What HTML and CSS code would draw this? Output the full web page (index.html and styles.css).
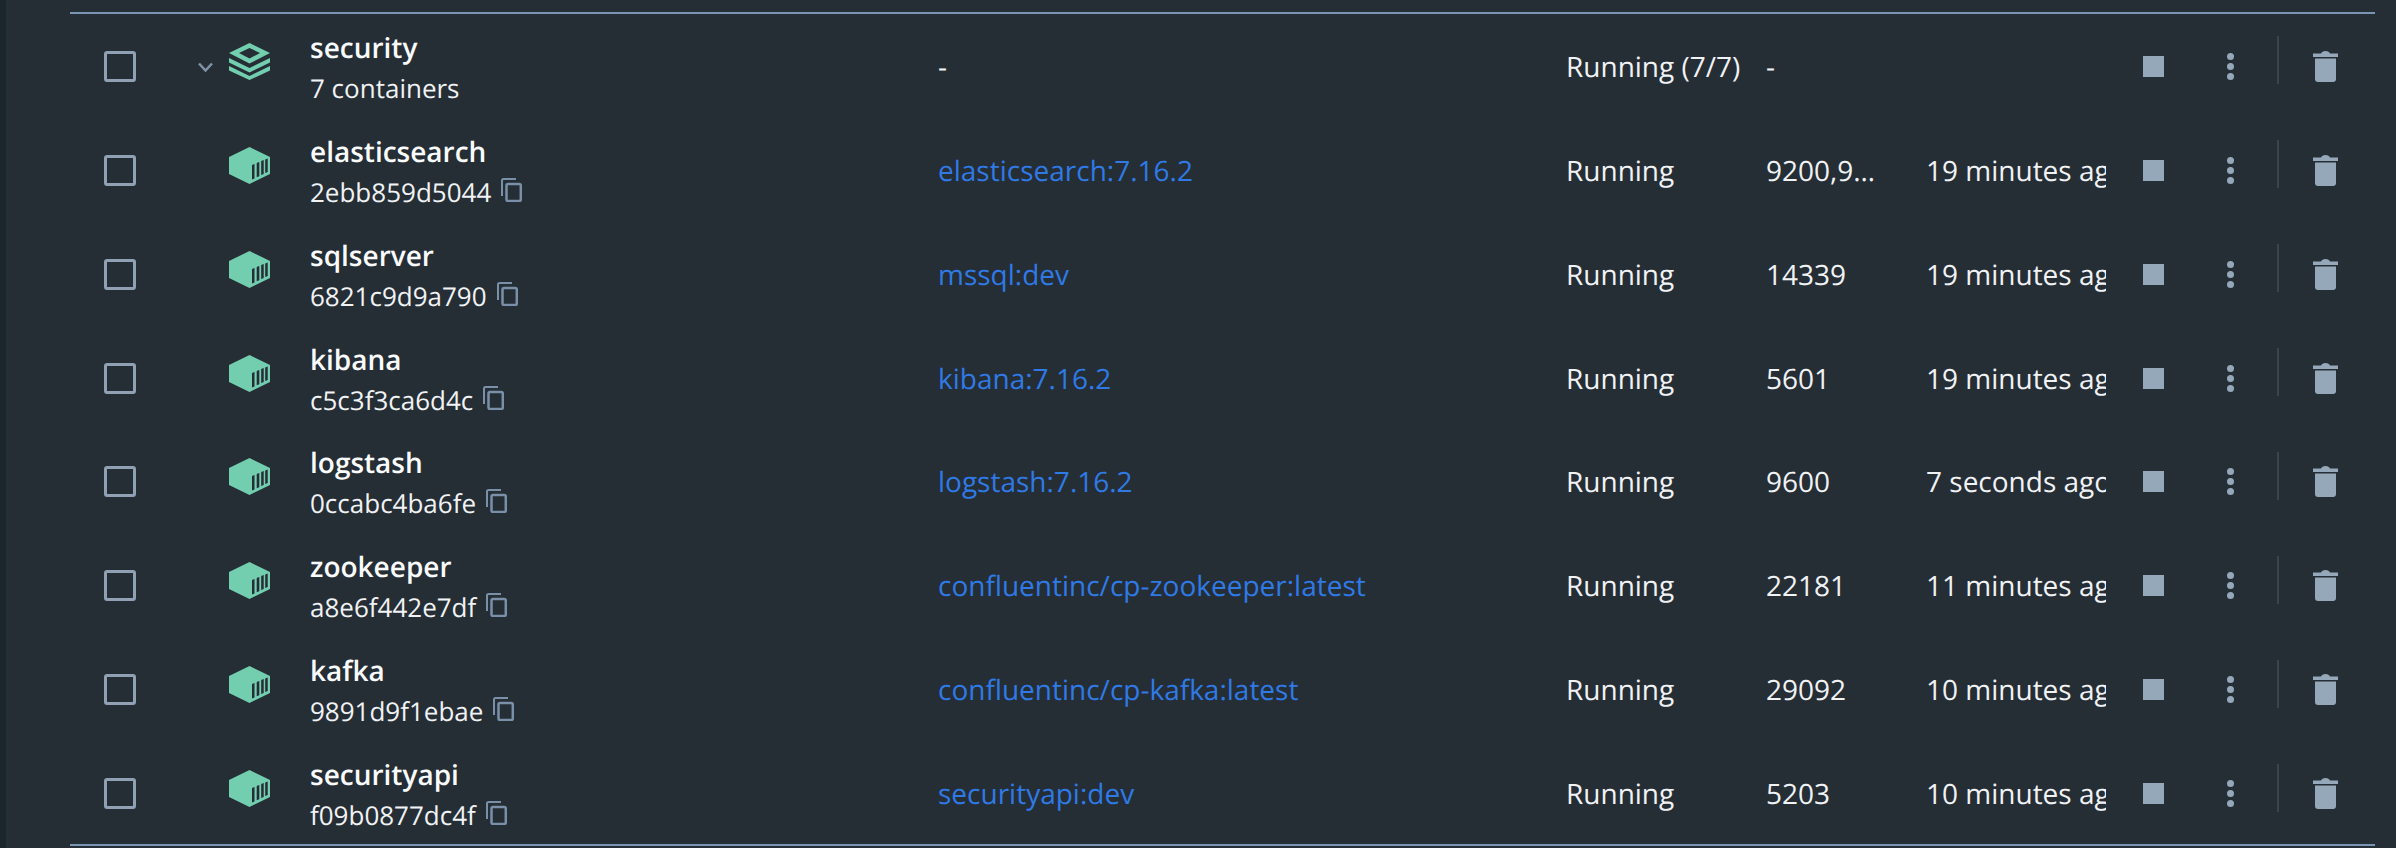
FILE: index.html
```html
<!DOCTYPE html>
<html lang="en">
<head>
  <meta charset="UTF-8">
  <title>Containers</title>
  <link rel="stylesheet" href="styles.css">
</head>
<body>
  <svg class="defs" width="0" height="0">
    <symbol id="i-stack" viewBox="0 0 41 37" preserveAspectRatio="none">
      <path d="M20.500 0 41 10 20.500 20.500 0 10Z M20.500 5 10 10 20.500 15.500 31 10Z" fill-rule="evenodd"/>
      <path d="M0 15 20.500 25 41 15V19.500L20.500 29.500 0 19.500Z"/>
      <path d="M0 23 20.500 33 41 23V27.500L20.500 37 0 27.500Z"/>
    </symbol>
    <symbol id="i-box" viewBox="0 0 41 37" preserveAspectRatio="none">
      <path d="M20.500 0 41 10V27L20.500 37 0 27V10Z"/>
      <path class="slot" d="M23 18 25.500 17V31.500L23 32.500Z M27.700 16 30.300 15V29.300L27.700 30.300Z M32.200 14 34.700 13V27L32.200 28Z M36.200 12.500 38.700 11.500V25L36.200 26Z"/>
    </symbol>
    <symbol id="i-copy" viewBox="0 0 21 24">
      <path d="M15 1H2.500A1.500 1.500 0 0 0 1 2.500V18" fill="none" stroke-width="2"/>
      <rect x="5.500" y="6" width="14.300" height="17" rx="1.500" fill="none" stroke-width="2.500"/>
    </symbol>
    <symbol id="i-trash" viewBox="0 0 25 31">
      <path d="M0 2.500H8Q9 0 12.500 0T17 2.500H25V6H0Z"/>
      <path d="M2 7.500H23V28Q23 31 20 31H5Q2 31 2 28Z"/>
    </symbol>
  </svg>

  <main class="list">
    <div class="row">
      <span class="check"></span>
      <svg class="chevron" viewBox="0 0 15 10"><path d="M1 1.500 7.500 8.500 14 1.500"/></svg>
      <svg class="kind"><use href="#i-stack"/></svg>
      <div class="name"><b>security</b><span>7 containers</span></div>
      <div class="image plain">-</div>
      <div class="status">Running (7/7)</div>
      <div class="port">-</div>
      <div class="time"></div>
      <div class="actions">
        <i class="stop"></i><i class="dots"></i><i class="sep"></i><svg class="trash"><use href="#i-trash"/></svg>
      </div>
    </div>

    <div class="row">
      <span class="check"></span><span></span>
      <svg class="kind"><use href="#i-box"/></svg>
      <div class="name"><b>elasticsearch</b><span>2ebb859d5044<svg class="copy"><use href="#i-copy"/></svg></span></div>
      <div class="image">elasticsearch:7.16.2</div>
      <div class="status">Running</div>
      <div class="port">9200,9300</div>
      <div class="time">19 minutes ago</div>
      <div class="actions">
        <i class="stop"></i><i class="dots"></i><i class="sep"></i><svg class="trash"><use href="#i-trash"/></svg>
      </div>
    </div>

    <div class="row">
      <span class="check"></span><span></span>
      <svg class="kind"><use href="#i-box"/></svg>
      <div class="name"><b>sqlserver</b><span>6821c9d9a790<svg class="copy"><use href="#i-copy"/></svg></span></div>
      <div class="image">mssql:dev</div>
      <div class="status">Running</div>
      <div class="port">14339</div>
      <div class="time">19 minutes ago</div>
      <div class="actions">
        <i class="stop"></i><i class="dots"></i><i class="sep"></i><svg class="trash"><use href="#i-trash"/></svg>
      </div>
    </div>

    <div class="row">
      <span class="check"></span><span></span>
      <svg class="kind"><use href="#i-box"/></svg>
      <div class="name"><b>kibana</b><span>c5c3f3ca6d4c<svg class="copy"><use href="#i-copy"/></svg></span></div>
      <div class="image">kibana:7.16.2</div>
      <div class="status">Running</div>
      <div class="port">5601</div>
      <div class="time">19 minutes ago</div>
      <div class="actions">
        <i class="stop"></i><i class="dots"></i><i class="sep"></i><svg class="trash"><use href="#i-trash"/></svg>
      </div>
    </div>

    <div class="row">
      <span class="check"></span><span></span>
      <svg class="kind"><use href="#i-box"/></svg>
      <div class="name"><b>logstash</b><span>0ccabc4ba6fe<svg class="copy"><use href="#i-copy"/></svg></span></div>
      <div class="image">logstash:7.16.2</div>
      <div class="status">Running</div>
      <div class="port">9600</div>
      <div class="time">7 seconds ago</div>
      <div class="actions">
        <i class="stop"></i><i class="dots"></i><i class="sep"></i><svg class="trash"><use href="#i-trash"/></svg>
      </div>
    </div>

    <div class="row">
      <span class="check"></span><span></span>
      <svg class="kind"><use href="#i-box"/></svg>
      <div class="name"><b>zookeeper</b><span>a8e6f442e7df<svg class="copy"><use href="#i-copy"/></svg></span></div>
      <div class="image">confluentinc/cp-zookeeper:latest</div>
      <div class="status">Running</div>
      <div class="port">22181</div>
      <div class="time">11 minutes ago</div>
      <div class="actions">
        <i class="stop"></i><i class="dots"></i><i class="sep"></i><svg class="trash"><use href="#i-trash"/></svg>
      </div>
    </div>

    <div class="row">
      <span class="check"></span><span></span>
      <svg class="kind"><use href="#i-box"/></svg>
      <div class="name"><b>kafka</b><span>9891d9f1ebae<svg class="copy"><use href="#i-copy"/></svg></span></div>
      <div class="image">confluentinc/cp-kafka:latest</div>
      <div class="status">Running</div>
      <div class="port">29092</div>
      <div class="time">10 minutes ago</div>
      <div class="actions">
        <i class="stop"></i><i class="dots"></i><i class="sep"></i><svg class="trash"><use href="#i-trash"/></svg>
      </div>
    </div>

    <div class="row">
      <span class="check"></span><span></span>
      <svg class="kind"><use href="#i-box"/></svg>
      <div class="name"><b>securityapi</b><span>f09b0877dc4f<svg class="copy"><use href="#i-copy"/></svg></span></div>
      <div class="image">securityapi:dev</div>
      <div class="status">Running</div>
      <div class="port">5203</div>
      <div class="time">10 minutes ago</div>
      <div class="actions">
        <i class="stop"></i><i class="dots"></i><i class="sep"></i><svg class="trash"><use href="#i-trash"/></svg>
      </div>
    </div>
  </main>
</body>
</html>
```

FILE: styles.css
```css
html, body {
  height: 100%;
}

body {
  margin: 0;
  background-color: #252d35;
  border-left: 6px solid #1b252c;
  box-sizing: border-box;
  font-family: "Open Sans", sans-serif;
  font-size: 28px;
  color: #f0f2f4;
  text-rendering: geometricPrecision;
  overflow: hidden;
}

.defs {
  position: absolute;
}

.list {
  margin: 12px 21px 0 64px;
  height: 830px;
  border-top: 2px solid #7a94b3;
  border-bottom: 2px solid #7a94b3;
  display: grid;
  grid-template-rows: repeat(8, 103.875px);
}

.row {
  display: grid;
  grid-template-columns: 124px 35px 81px 628px 628px 200px 160px 180px 1fr;
  align-items: center;
  padding-top: 1px;
  box-sizing: border-box;
}

.check {
  width: 32px;
  height: 31px;
  box-sizing: border-box;
  margin-left: 34px;
  border: 3.500px solid #8fa1b3;
  border-radius: 3px;
}

.chevron {
  width: 15px;
  height: 10px;
  margin-left: 4px;
  margin-top: 2px;
  fill: none;
  stroke: #8093a6;
  stroke-width: 2.500;
}

.kind {
  width: 41px;
  height: 37px;
  fill: #73ceb0;
  margin-top: -10px;
}

.slot {
  fill: #252d35;
}

.name {
  padding-top: 4px;
}

.name b {
  display: block;
  font-size: 28px;
  font-weight: 600;
  line-height: 39px;
  color: #fafbfc;
}

.name span {
  display: flex;
  align-items: center;
  font-size: 26px;
  line-height: 40px;
}

.copy {
  width: 21px;
  height: 24px;
  margin-left: 10px;
  margin-top: -4px;
  stroke: #7a90a8;
  fill: none;
}

.image,
.status,
.port,
.time {
  padding-top: 1px;
}

.image {
  color: #2f7ae5;
}

.image.plain,
.port {
  color: #f0f2f4;
}

.port {
  width: 112px;
  overflow: hidden;
  text-overflow: ellipsis;
  white-space: nowrap;
}

.time {
  overflow: hidden;
  white-space: nowrap;
}

.actions {
  display: flex;
  align-items: center;
  padding-left: 37px;
}

.stop {
  width: 21px;
  height: 21px;
  background-color: #95a8ba;
}

.dots {
  width: 7px;
  height: 7px;
  margin-left: 63px;
  border-radius: 50%;
  background-color: #95a8ba;
  box-shadow: 0 -10px 0 #95a8ba, 0 10px 0 #95a8ba;
}

.sep {
  width: 2px;
  height: 48px;
  margin-left: 43px;
  margin-top: -12px;
  background-color: #3a444e;
}

.trash {
  width: 25px;
  height: 31px;
  margin-left: 34px;
  fill: #95a8ba;
}
```
